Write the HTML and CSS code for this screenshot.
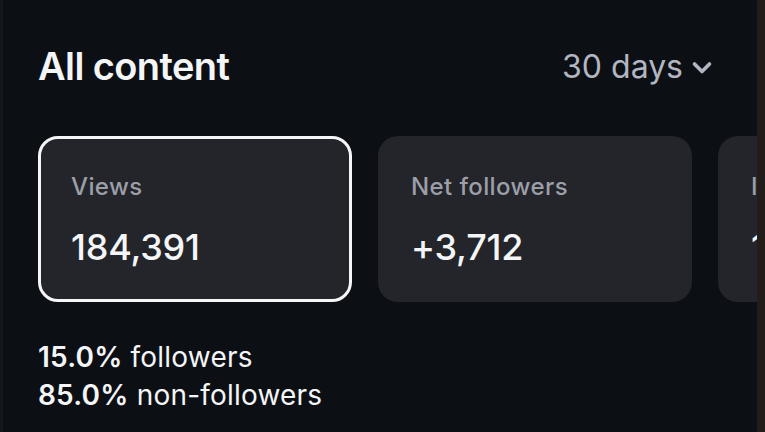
FILE: index.html
```html
<!DOCTYPE html>
<html lang="en">
<head>
  <meta charset="UTF-8">
  <meta name="viewport" content="width=device-width, initial-scale=1.0">
  <title>All content</title>
  <link rel="stylesheet" href="styles.css">
</head>
<body>
<div class="screen">
  <div class="panel">
    <div class="header">
      <h1>All content</h1>
      <button class="range">
        30 days
        <svg class="chevron" viewBox="0 0 22 16" width="22" height="16">
          <path d="M3.5 4 L11 11.5 L18.5 4" fill="none" stroke="currentColor" stroke-width="3.6" stroke-linecap="round" stroke-linejoin="round"/>
        </svg>
      </button>
    </div>

    <div class="cards">
      <div class="card selected">
        <div class="label">Views</div>
        <div class="value">184,391</div>
      </div>
      <div class="card">
        <div class="label">Net followers</div>
        <div class="value">+3,712</div>
      </div>
      <div class="card">
        <div class="label">Interactions</div>
        <div class="value">12,408</div>
      </div>
    </div>

    <div class="split">
      <div><b>15.0%</b> followers</div>
      <div><b>85.0%</b> non-followers</div>
    </div>
  </div>
  <div class="edge"></div>
</div>
</body>
</html>
```

FILE: styles.css
```css
body {
  margin: 0;
  background-color: #0c0f14;
  font-family: Inter, 'Noto Sans', sans-serif;
  color: #f4f5f7;
}
.screen {
  display: flex;
  height: 432px;
  overflow: hidden;
  border-left: 3px solid #15171b;
}
.panel {
  flex: 1;
  min-width: 0;
  overflow: hidden;
  padding: 43px 0 0 35px;
}
.edge {
  width: 8px;
  background-color: #221d1a;
}
.header {
  display: flex;
  align-items: flex-start;
  justify-content: space-between;
  padding-right: 44px;
}
h1 {
  margin: 0;
  font-size: 38px;
  line-height: 46px;
  font-weight: 600;
  letter-spacing: -0.6px;
}
.range {
  display: flex;
  align-items: center;
  gap: 8px;
  margin-top: 4px;
  padding: 0;
  background: none;
  border: none;
  color: #b3b6c0;
  font-family: inherit;
  font-size: 32px;
  line-height: 40px;
  font-weight: 400;
  letter-spacing: 0;
}
.chevron {
  margin-top: 2px;
}
.cards {
  display: flex;
  gap: 26px;
  margin-top: 47px;
}
.card {
  flex: 0 0 auto;
  box-sizing: border-box;
  width: 314px;
  height: 166px;
  padding: 33px 30px 0;
  border: 3px solid transparent;
  border-radius: 20px;
  background-color: #23252b;
}
.card.selected {
  border-color: #f6f6f8;
}
.label {
  font-size: 24px;
  line-height: 29px;
  font-weight: 500;
  color: #9c9ea8;
  letter-spacing: 0.4px;
}
.value {
  margin-top: 24px;
  font-size: 36px;
  line-height: 44px;
  font-weight: 500;
  letter-spacing: -0.2px;
}
.split {
  margin-top: 36px;
  font-size: 28px;
  line-height: 38px;
  letter-spacing: 0.2px;
}
.split b {
  font-weight: 600;
}
```
